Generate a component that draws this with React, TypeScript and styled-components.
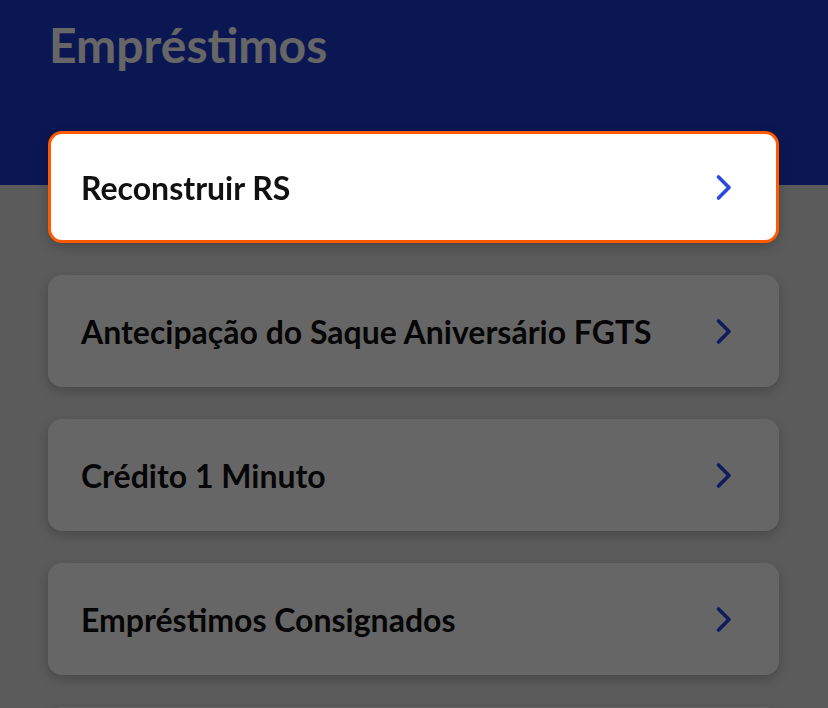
import React from "react"
import styled, { createGlobalStyle } from "styled-components"

const GlobalStyle = createGlobalStyle`
  html, body {
    margin: 0;
    padding: 0;
    background: #e3e3e3;
    font-family: Lato, "Open Sans", "Liberation Sans", sans-serif;
  }
`

const Page = styled.div`
  height: 708px;
  background: #e3e3e3;
  overflow: hidden;
`

const Header = styled.header`
  height: 185px;
  box-sizing: border-box;
  padding: 16px 49px 0;
  background: #1c3ad0;

  h1 {
    margin: 0;
    font-size: 48px;
    line-height: 1.2;
    font-weight: 700;
    color: #fff;
  }
`

const List = styled.ul`
  list-style: none;
  margin: -54px 0 0;
  padding: 0 49px 0 48px;
  display: flex;
  flex-direction: column;
  gap: 32px;
`

const Card = styled.li<{ $active?: boolean }>`
  position: relative;
  z-index: ${(p) => (p.$active ? 10 : "auto")};
  height: 112px;
  box-sizing: border-box;
  display: flex;
  align-items: center;
  justify-content: space-between;
  padding: 0 44px 0 30px;
  border: 3px solid ${(p) => (p.$active ? "#ff5a00" : "transparent")};
  border-radius: 14px;
  background: #fff;
  box-shadow: 0 4px 12px rgba(0, 0, 0, 0.22);
  color: #111;
  font-size: 32px;
  font-weight: 700;
`

const Chevron = styled.svg`
  width: 17px;
  height: 27px;
  flex: none;
  margin-left: auto;
  color: #2a47e0;
`

const Overlay = styled.div`
  position: fixed;
  inset: 0;
  z-index: 5;
  background: rgba(0, 0, 0, 0.6);
`

const items = [
  "Reconstruir RS",
  "Antecipação do Saque Aniversário FGTS",
  "Crédito 1 Minuto",
  "Empréstimos Consignados",
  "",
]

export default function App() {
  return (
    <Page>
      <GlobalStyle />
      <Header>
        <h1>Empréstimos</h1>
      </Header>
      <List>
        {items.map((label, i) => (
          <Card key={i} $active={i === 0}>
            {label && <span>{label}</span>}
            <Chevron viewBox="0 0 17 27" fill="none">
              <path
                d="M3.5 3 L14 13.5 L3.5 24"
                stroke="currentColor"
                strokeWidth="3.6"
                strokeLinecap="round"
                strokeLinejoin="round"
              />
            </Chevron>
          </Card>
        ))}
      </List>
      <Overlay />
    </Page>
  )
}
